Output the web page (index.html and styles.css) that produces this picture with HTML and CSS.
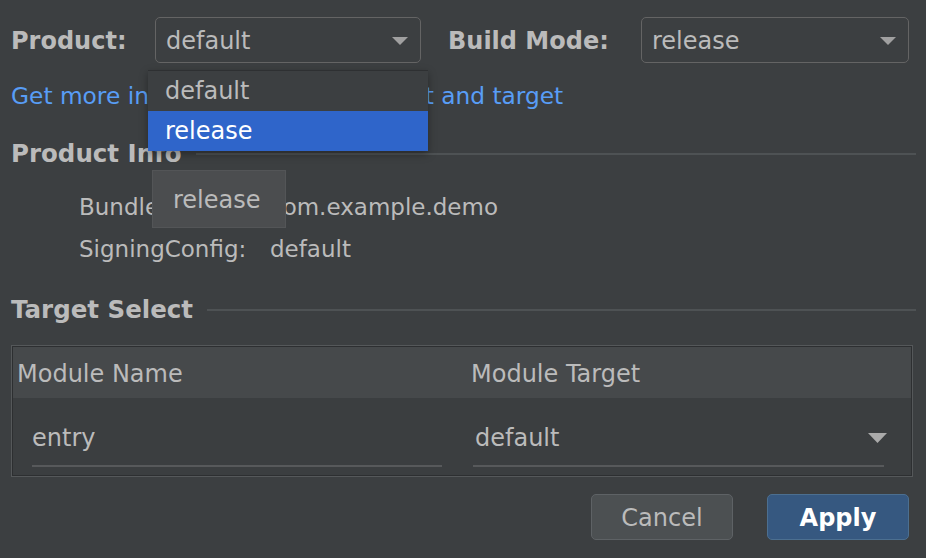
FILE: index.html
```html
<!DOCTYPE html>
<html lang="en">
<head>
    <meta charset="UTF-8">
    <meta name="viewport" content="width=device-width, initial-scale=1.0">
    <title>Product and Build Mode</title>
    <link rel="stylesheet" href="styles.css">
</head>
<body>

    <div class="dialog">
        <div class="top-row">
            <span class="field-label">Product:</span>
            <div class="combo">
                <span>default</span>
                <svg class="arrow" width="16" height="8" viewBox="0 0 16 8"><polygon points="0,0 16,0 8,8"/></svg>
            </div>
            <span class="field-label">Build Mode:</span>
            <div class="combo">
                <span>release</span>
                <svg class="arrow" width="16" height="8" viewBox="0 0 16 8"><polygon points="0,0 16,0 8,8"/></svg>
            </div>
        </div>

        <a class="help-link" href="#">Get more information about product and target</a>

        <div class="section-title">
            <span>Product Info</span>
            <div class="rule"></div>
        </div>

        <div class="info-grid">
            <span>BundleName:</span>
            <span>com.example.demo</span>
            <span>SigningConfig:</span>
            <span>default</span>
        </div>

        <div class="section-title target-title">
            <span>Target Select</span>
            <div class="rule"></div>
        </div>

        <div class="targets">
            <div class="targets-head">
                <span>Module Name</span>
                <span>Module Target</span>
            </div>
            <div class="targets-row">
                <div class="cell">
                    <div class="cell-input">entry</div>
                </div>
                <div class="cell cell-target">
                    <div class="cell-input">
                        <span>default</span>
                        <svg class="arrow" width="19" height="10" viewBox="0 0 19 10"><polygon points="0,0 19,0 9.5,10"/></svg>
                    </div>
                </div>
            </div>
        </div>

        <div class="actions">
            <button class="btn">Cancel</button>
            <button class="btn btn-primary">Apply</button>
        </div>

        <!-- open list of the Product combo -->
        <ul class="popup">
            <li>default</li>
            <li class="selected">release</li>
        </ul>

        <div class="tooltip">release</div>
    </div>

</body>
</html>
```

FILE: styles.css
```css
body {
    margin: 0;
    background-color: #3c3f41;
    color: #bbbbbb;
    font-family: 'DejaVu Sans', 'Liberation Sans', sans-serif;
    font-size: 24px;
    line-height: 30px;
}

.dialog {
    position: relative;
    height: 558px;
    padding: 17px 10px 0 11px;
    box-sizing: border-box;
}

.top-row {
    display: grid;
    grid-template-columns: 117px 266px 166px 268px;
    column-gap: 27px;
    align-items: center;
    height: 46px;
    padding-top: 2px;
    box-sizing: border-box;
}

.top-row .combo {
    margin-top: -2px;
}

.field-label {
    font-weight: bold;
    white-space: nowrap;
}

.combo {
    display: flex;
    align-items: center;
    justify-content: space-between;
    height: 46px;
    padding: 2px 12px 0 10px;
    border: 1px solid #646464;
    border-radius: 5px;
    box-sizing: border-box;
}

.arrow {
    fill: #a0a0a0;
}

.help-link {
    display: block;
    margin-top: 18px;
    font-size: 23.3px;
    color: #589df6;
    text-decoration: none;
    white-space: nowrap;
}

.section-title {
    display: flex;
    align-items: center;
    margin-top: 28px;
    font-weight: bold;
    font-size: 24.5px;
}

.section-title .rule {
    flex: 1;
    height: 2px;
    margin-left: 14px;
    background-color: #4e5254;
}

.target-title {
    margin-top: 31px;
}

.info-grid {
    display: grid;
    grid-template-columns: 191px 1fr;
    row-gap: 12px;
    margin-top: 23px;
    padding-left: 68px;
    font-size: 23px;
}

.targets {
    margin: 20px 3px 0 0;
    border: 1px solid #55585a;
    box-shadow: inset 0 0 0 1px #2d2f31;
    padding: 1px;
}

.targets-head {
    display: grid;
    grid-template-columns: 454px 1fr;
    height: 51px;
    align-items: center;
    padding-top: 3px;
    box-sizing: border-box;
    background-color: #46494b;
}

.targets-head span {
    padding-left: 4px;
}

.targets-row {
    display: grid;
    grid-template-columns: 454px 1fr;
    height: 77px;
    background-color: #3b3e40;
}

.cell {
    padding: 25px 25px 0 19px;
}

.cell-target {
    padding: 25px 27px 0 6px;
}

.cell-input {
    display: flex;
    align-items: center;
    justify-content: space-between;
    height: 30px;
    padding: 0 0 12px 0;
    border-bottom: 2px solid #57595b;
}

.cell-target .cell-input span {
    padding-left: 2px;
}

.cell-target .arrow {
    margin-right: -3px;
    fill: #aaaaaa;
}

.actions {
    display: flex;
    justify-content: flex-end;
    gap: 34px;
    margin-top: 17px;
    padding-right: 7px;
}

.btn {
    width: 142px;
    height: 46px;
    padding-top: 3px;
    border: 1px solid #5e6265;
    border-radius: 5px;
    background-color: #4c5052;
    color: #bbbbbb;
    font-family: 'DejaVu Sans', 'Liberation Sans', sans-serif;
    font-size: 24px;
}

.btn-primary {
    border-color: #4c6f90;
    background-color: #365880;
    color: #ffffff;
    font-weight: bold;
}

.popup {
    position: absolute;
    left: 148px;
    top: 70px;
    width: 280px;
    margin: 0;
    padding: 0;
    list-style: none;
    background-color: #3c3f41;
    border-top: 1px solid #2e3032;
    box-shadow: 0 3px 8px rgba(0, 0, 0, 0.35);
}

.popup li {
    height: 40px;
    line-height: 40px;
    padding-left: 17px;
}

.popup .selected {
    background-color: #2f65ca;
    color: #ffffff;
}

.tooltip {
    position: absolute;
    left: 152px;
    top: 170px;
    width: 134px;
    height: 58px;
    line-height: 58px;
    padding-left: 20px;
    box-sizing: border-box;
    background-color: #4b4d4f;
    border: 1px solid #535557;
}
```
